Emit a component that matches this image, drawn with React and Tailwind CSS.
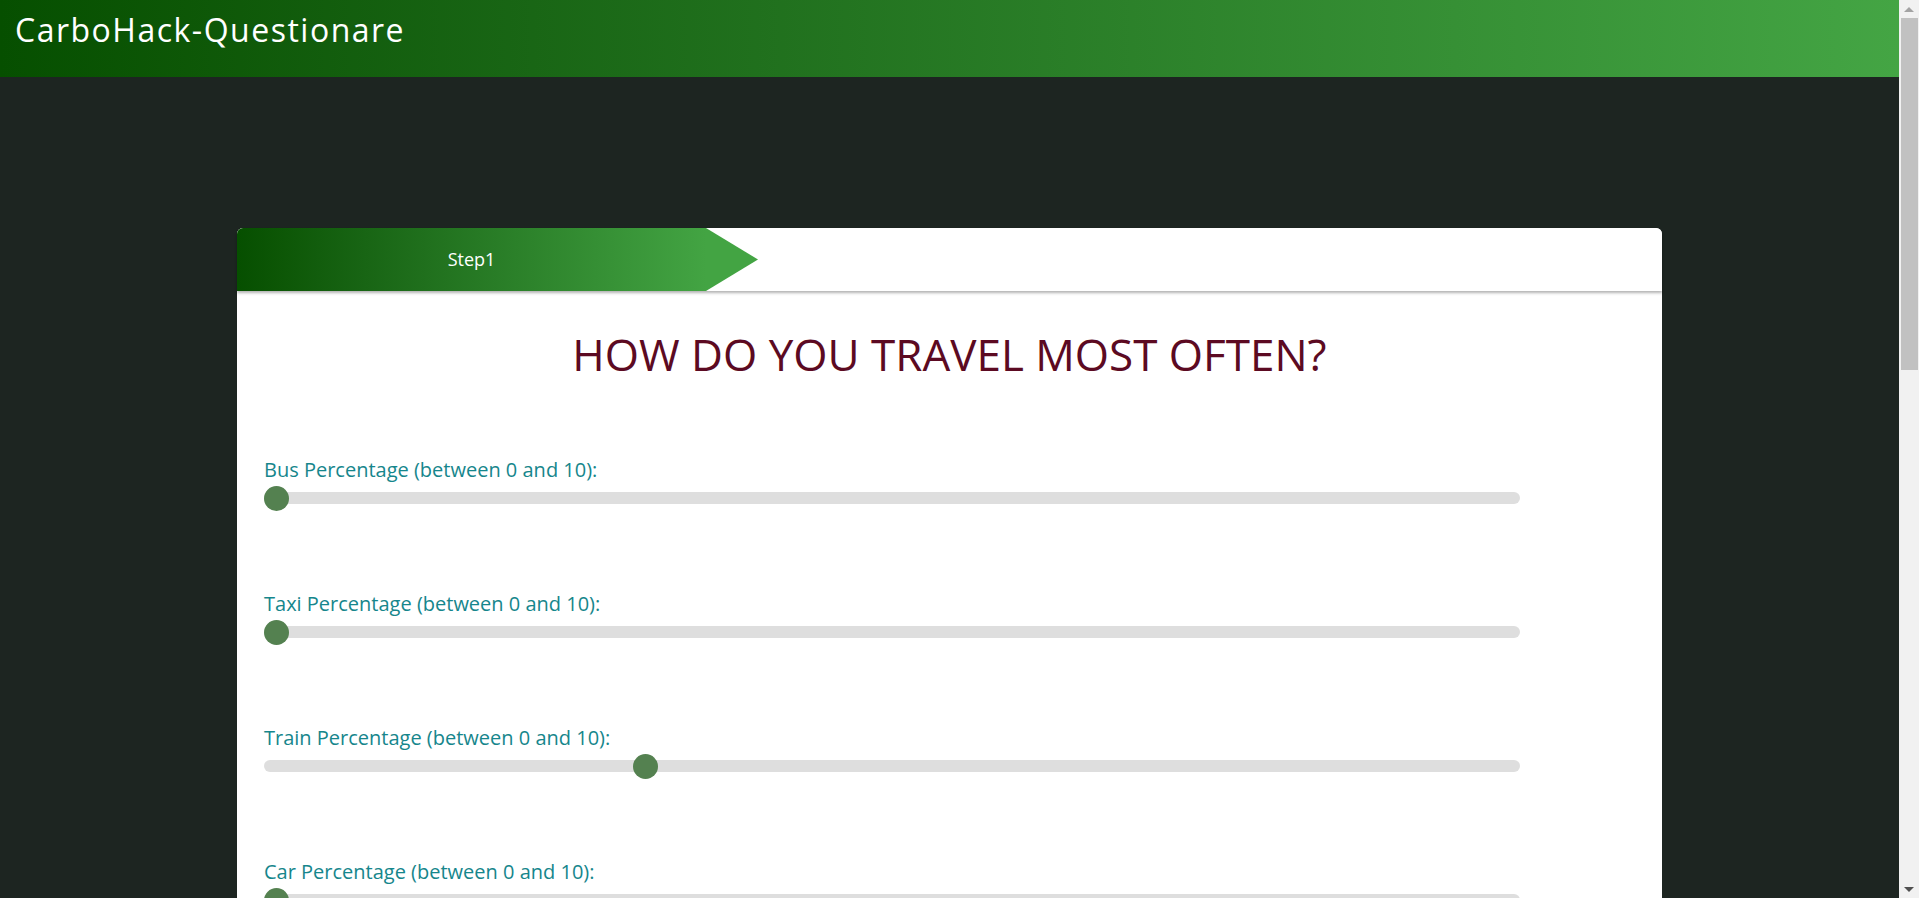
import React from "react";

const questions = [
  { label: "Bus Percentage (between 0 and 10):", value: 0 },
  { label: "Taxi Percentage (between 0 and 10):", value: 0 },
  { label: "Train Percentage (between 0 and 10):", value: 3 },
  { label: "Car Percentage (between 0 and 10):", value: 0 },
  { label: "Plane Percentage (between 0 and 10):", value: 0 },
];

const SliderField = ({ label, value }) => {
  // thumb is 25px, track is 1256px wide
  const left = (value / 10) * (1256 - 25);
  return (
    <div className="mb-[79px]">
      <p className="text-[20px] leading-[27px] text-[#16868c]">{label}</p>
      <div className="relative mt-[3px] h-[25px] w-[1256px]">
        <div className="absolute left-0 right-0 top-[6px] h-[12px] rounded-full bg-[#dedede]" />
        <div
          className="absolute top-0 h-[25px] w-[25px] rounded-full bg-[#548150]"
          style={{ left: `${left}px` }}
        />
      </div>
    </div>
  );
};

const Scrollbar = () => (
  <div className="fixed right-0 top-0 flex h-screen w-[20px] flex-col items-center bg-[#f1f1f1]">
    <div className="flex h-[18px] w-full items-center justify-center">
      <div className="h-0 w-0 border-x-[5px] border-b-[5px] border-x-transparent border-b-[#a3a3a3]" />
    </div>
    <div className="h-[352px] w-[20px] pl-[2px] pr-[1px]">
      <div className="h-full w-full bg-[#c1c1c1]" />
    </div>
    <div className="flex-1" />
    <div className="flex h-[18px] w-full items-center justify-center">
      <div className="h-0 w-0 border-x-[5px] border-t-[5px] border-x-transparent border-t-[#505050]" />
    </div>
  </div>
);

const App = () => {
  return (
    <div
      className="min-h-screen bg-[#1d2521] pb-[62px] pr-[20px]"
      style={{ fontFamily: '"Open Sans", "Noto Sans", sans-serif' }}
    >
      <header className="h-[77px] bg-gradient-to-r from-[#064f00] to-[#44a544] pl-[15px] pt-[7px]">
        <h1 className="text-[32px] leading-[45px] tracking-[1.5px] text-white">CarboHack-Questionare</h1>
      </header>

      <div className="mx-auto mt-[151px] w-[1425px] min-h-[1910px] rounded-t-[6px] bg-white">
        <div className="flex h-[63px] rounded-t-[6px] bg-white shadow-[0_2px_3px_rgba(0,0,0,0.3)]">
          <div className="flex w-[469px] items-center justify-center rounded-tl-[6px] bg-gradient-to-r from-[#064f00] to-[#43a443] text-[18px] text-white">
            Step1
          </div>
          <svg width="52" height="63" viewBox="0 0 52 63" className="block">
            <polygon points="0,0 52,31.5 0,63" fill="#43a443" />
          </svg>
        </div>

        <div className="px-[27px] pt-[27px]">
          <h2 className="text-center text-[44px] leading-[72px] text-[#5c0a22]">
            HOW DO YOU TRAVEL MOST OFTEN?
          </h2>
          <div className="mt-[66px]">
            {questions.map((q) => (
              <SliderField key={q.label} label={q.label} value={q.value} />
            ))}
          </div>
        </div>
      </div>

      <Scrollbar />
    </div>
  );
};

export default App;
